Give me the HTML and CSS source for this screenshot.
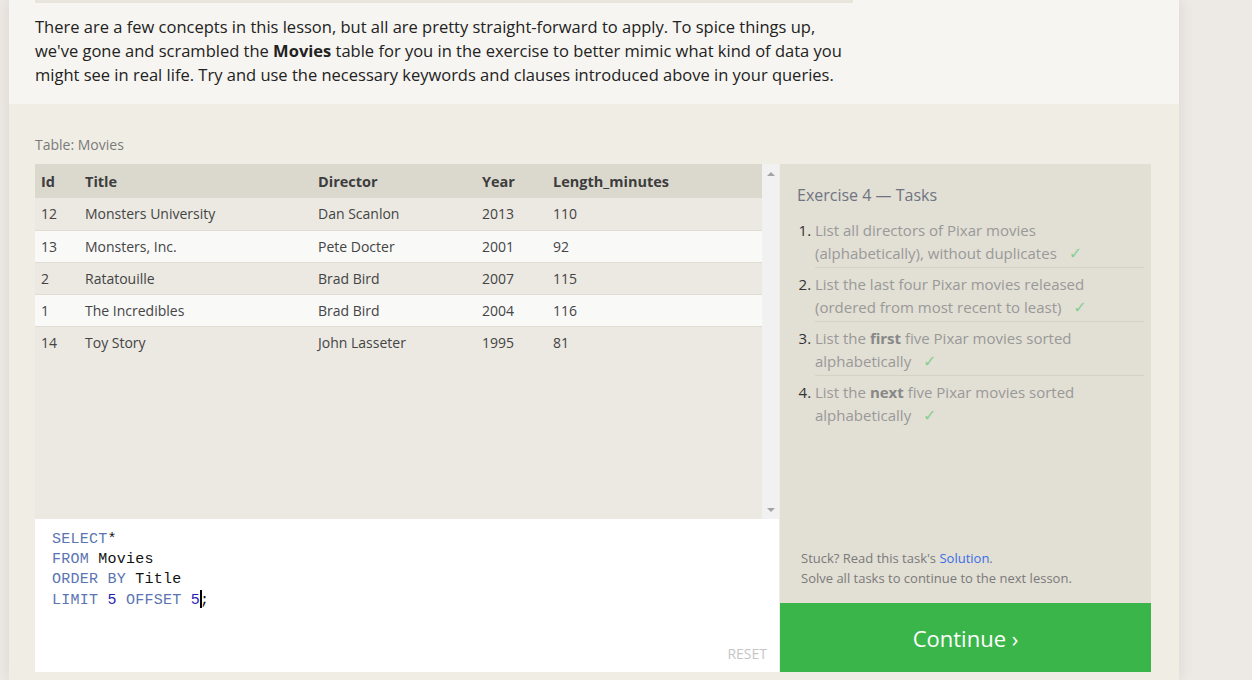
FILE: index.html
```html
<!DOCTYPE html>
<html>
<head>
<meta charset="utf-8">
<link rel="stylesheet" href="styles.css">
</head>
<body>
<div class="main">
  <section class="lesson">
    <div class="band"></div>
    <p class="lesson-text">There are a few concepts in this lesson, but all are pretty straight-forward to apply. To spice things up, we've gone and scrambled the <strong>Movies</strong> table for you in the exercise to better mimic what kind of data you might see in real life. Try and use the necessary keywords and clauses introduced above in your queries.</p>
  </section>
  <section class="exercise">
    <div class="table-label">Table: Movies</div>
    <div class="workspace">
      <div class="left-col">
        <div class="table-wrap">
          <div class="table-scroll">
            <table class="movies">
              <thead>
                <tr><th class="c-id">Id</th><th class="c-title">Title</th><th class="c-dir">Director</th><th class="c-year">Year</th><th class="c-len">Length_minutes</th></tr>
              </thead>
              <tbody>
                <tr><td>12</td><td>Monsters University</td><td>Dan Scanlon</td><td>2013</td><td>110</td></tr>
                <tr><td>13</td><td>Monsters, Inc.</td><td>Pete Docter</td><td>2001</td><td>92</td></tr>
                <tr><td>2</td><td>Ratatouille</td><td>Brad Bird</td><td>2007</td><td>115</td></tr>
                <tr><td>1</td><td>The Incredibles</td><td>Brad Bird</td><td>2004</td><td>116</td></tr>
                <tr><td>14</td><td>Toy Story</td><td>John Lasseter</td><td>1995</td><td>81</td></tr>
              </tbody>
            </table>
          </div>
          <div class="scrollbar">
            <span class="arrow up"></span>
            <span class="arrow down"></span>
          </div>
        </div>
        <div class="editor">
          <pre class="code"><span class="kw">SELECT</span>*
<span class="kw">FROM</span> Movies
<span class="kw">ORDER BY</span> Title
<span class="kw">LIMIT</span> <span class="num">5</span> <span class="kw">OFFSET</span> <span class="num">5</span><span class="cursor"></span>;</pre>
          <div class="reset">RESET</div>
        </div>
      </div>
      <div class="right-col">
        <div class="tasks">
          <h3 class="tasks-title">Exercise 4 — Tasks</h3>
          <ol class="task-list">
            <li><span class="t">List all directors of Pixar movies (alphabetically), without duplicates <span class="check">✓</span></span></li>
            <li><span class="t">List the last four Pixar movies released (ordered from most recent to least) <span class="check">✓</span></span></li>
            <li><span class="t">List the <b>first</b> five Pixar movies sorted alphabetically <span class="check">✓</span></span></li>
            <li><span class="t">List the <b>next</b> five Pixar movies sorted alphabetically <span class="check">✓</span></span></li>
          </ol>
          <div class="stuck">
            <div>Stuck? Read this task's <a class="sol">Solution</a>.</div>
            <div>Solve all tasks to continue to the next lesson.</div>
          </div>
        </div>
        <div class="continue">Continue ›</div>
      </div>
    </div>
  </section>
</div>
</body>
</html>
```

FILE: styles.css
```css
* { box-sizing: border-box; }
html, body { margin: 0; padding: 0; }
body {
  background: #ede9e5;
  font-family: "Open Sans", "Noto Sans", sans-serif;
  height: 680px;
  overflow: hidden;
}
.main {
  width: 1170px;
  margin-left: 9px;
  min-height: 680px;
  background: #f0ede5;
  box-shadow: 0 0 14px rgba(120, 100, 90, 0.14);
}
.lesson {
  background: #f6f5f1;
  padding: 0 0 17px 26px;
}
.band {
  width: 818px;
  height: 3px;
  background: #e8e6dc;
}
.lesson-text {
  margin: 12px 0 0 0;
  width: 825px;
  font-size: 16.5px;
  line-height: 24px;
  color: #222;
}
.lesson-text strong { font-weight: 700; }

.exercise {
  background: #f0ede5;
  padding: 31px 0 8px 26px;
  border-radius: 4px 4px 0 0;
}
.table-label {
  font-size: 14px;
  line-height: 20px;
  color: #7a7a7a;
  margin-bottom: 9px;
}
.workspace {
  display: flex;
  gap: 1px;
  align-items: stretch;
}
.left-col {
  width: 744px;
  display: flex;
  flex-direction: column;
}
.table-wrap {
  height: 355px;
  display: flex;
  background: #ebe9e2;
}
.table-scroll { flex: 1; }
.movies {
  width: 727px;
  border-collapse: collapse;
  font-size: 14px;
  color: #444;
}
.movies th {
  background: #dbd9ce;
  height: 34px;
  text-align: left;
  font-weight: 700;
  font-size: 14.5px;
  padding: 0 0 0 6px;
  color: #3d3d3d;
}
.movies td {
  height: 32px;
  padding: 0 0 0 6px;
  border-bottom: 1px solid #dfdcd4;
}
.movies tbody tr:nth-child(odd) td { background: #ebe9e2; }
.movies tbody tr:nth-child(even) td { background: #f9f9f8; }
.movies tbody tr:last-child td { border-bottom: none; }
.c-id { width: 44px; }
.c-title { width: 233px; }
.c-dir { width: 164px; }
.c-year { width: 71px; }

.scrollbar {
  width: 17px;
  background: #f1f1f1;
  display: flex;
  flex-direction: column;
  justify-content: space-between;
  align-items: center;
  padding: 8px 0 7px;
}
.arrow {
  width: 0; height: 0;
  border-left: 4px solid transparent;
  border-right: 4px solid transparent;
}
.arrow.up { border-bottom: 4px solid #a3a3a3; }
.arrow.down { border-top: 4px solid #a3a3a3; }

.editor {
  height: 153px;
  background: #fff;
  position: relative;
  padding: 11px 0 0 17px;
}
.code {
  margin: 0;
  font-family: "Liberation Mono", "DejaVu Sans Mono", monospace;
  font-size: 15px;
  letter-spacing: 0.25px;
  line-height: 20px;
  color: #111;
}
.kw { color: #5b74b3; }
.num { color: #1f22b5; }
.cursor {
  display: inline-block;
  width: 2px;
  height: 18px;
  background: #000;
  vertical-align: -4px;
  margin-right: -2px;
}
.reset {
  position: absolute;
  right: 12px;
  bottom: 9px;
  font-size: 14px;
  color: #c5c5c5;
}

.right-col {
  width: 371px;
  display: flex;
  flex-direction: column;
}
.tasks {
  height: 439px;
  background: #e2dfd4;
  display: flex;
  flex-direction: column;
  padding: 20px 7px 15px 17px;
}
.tasks-title {
  margin: 0;
  font-weight: 400;
  font-size: 16px;
  line-height: 22px;
  color: #6f7482;
}
.task-list {
  margin: 8px 0 0 0;
  padding: 0 0 0 18px;
  font-size: 15px;
  line-height: 22.5px;
  color: #999;
}
.task-list li {
  padding: 5px 0 2px 0;
  border-bottom: 1px solid #d5d1c5;
}
.task-list li:last-child { border-bottom: none; }
.task-list li::marker { color: #333; }
.task-list b { color: #888; font-weight: 700; }
.check {
  color: #86cf93;
  margin-left: 8px;
  font-family: "DejaVu Sans", sans-serif;
  font-size: 16px;
}
.stuck {
  margin-top: auto;
  font-size: 13px;
  line-height: 20px;
  color: #7a7a7a;
  padding-left: 4px;
}
.sol { color: #3a6ee8; text-decoration: none; }
.continue {
  height: 69px;
  background: #3ab54a;
  color: #fff;
  font-size: 22px;
  display: flex;
  align-items: center;
  justify-content: center;
}
```
